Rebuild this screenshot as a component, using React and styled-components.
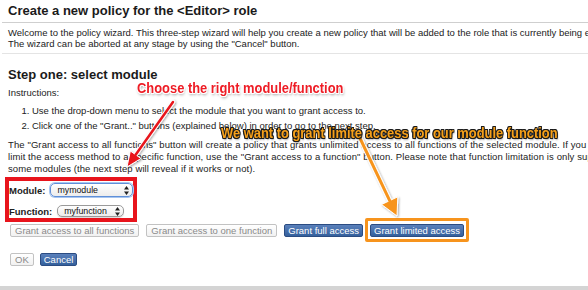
import React from 'react'
import styled, { createGlobalStyle } from 'styled-components'

const GlobalStyle = createGlobalStyle`
  html, body {
    margin: 0;
    padding: 0;
    overflow: hidden;
    background: #fff;
  }
`

const Page = styled.div`
  position: relative;
  width: 760px;
  height: 290px;
  padding: 0 8px;
  box-sizing: border-box;
  display: flex;
  flex-direction: column;
  font-family: "Liberation Sans", Arial, sans-serif;
  font-size: 9.5px;
  color: #222;
`

const Title = styled.h1`
  margin: 3px 0 0;
  font-size: 13px;
  line-height: 16px;
  font-weight: bold;
  color: #1a1a1a;
`

const Rule = styled.div`
  height: 1px;
  margin: ${p => p.top}px 0 0 -6px;
  background: ${p => p.tone};
`

const Lines = styled.p`
  margin: ${p => p.top}px 0 0;
  line-height: ${p => p.lh}px;
  letter-spacing: ${p => p.spread || 0}px;
  white-space: nowrap;
`

const StepTitle = styled.h2`
  margin: 13px 0 0;
  font-size: 13px;
  line-height: 16px;
  font-weight: bold;
  color: #1a1a1a;
`

const Steps = styled.ol`
  margin: 4px 0 0;
  padding-left: 24px;
  line-height: 15px;
  white-space: nowrap;
`

const RedMark = styled.div`
  width: 132px;
  box-sizing: border-box;
  margin: 2px 0 0 -3px;
  padding: 2px 0 0 0;
  border: 4px solid #e8141c;
  display: flex;
  flex-direction: column;
  gap: 7px;
`

const Field = styled.div`
  display: flex;
  align-items: center;
  height: 14px;
`

const Label = styled.span`
  font-weight: bold;
  margin-right: 5px;
`

const Select = styled.div`
  width: ${p => p.w}px;
  height: ${p => p.h}px;
  box-sizing: border-box;
  display: flex;
  align-items: center;
  justify-content: space-between;
  padding: 0 3px 0 6px;
  border-radius: 5px;
  border: 1px solid ${p => (p.focus ? '#5f8fd8' : '#9a9a9a')};
  box-shadow: ${p => (p.focus ? '0 0 0 1px #a8c6f0' : '0 1px 1px rgba(0,0,0,0.15)')};
  background: linear-gradient(#ffffff, #ececec);
  font-size: 8.8px;
  color: #111;
  white-space: nowrap;
`

const Arrows = () => (
  <svg width="5" height="9" viewBox="0 0 5 9">
    <path d="M2.5 0 L5 3.5 L0 3.5 Z M2.5 9 L5 5.5 L0 5.5 Z" fill="#222" />
  </svg>
)

const ButtonRow = styled.div`
  display: flex;
  align-items: center;
  gap: ${p => p.gap}px;
  margin: ${p => p.top}px 0 0 2px;
`

const Button = styled.button`
  height: 13px;
  box-sizing: border-box;
  margin: 0;
  padding: 0 ${p => (p.primary ? 3 : 4)}px;
  font-family: "Liberation Sans", Arial, sans-serif;
  font-size: 9.5px;
  line-height: 11px;
  border-radius: 2px;
  white-space: nowrap;
  border: 1px solid ${p => (p.primary ? '#2b4c82' : '#c2c2c2')};
  color: ${p => (p.primary ? '#fff' : '#8a8a8a')};
  background: ${p =>
    p.primary ? 'linear-gradient(#5a80bb, #34609c)' : 'linear-gradient(#ffffff, #f1f1f1)'};
`

const OrangeMark = styled.div`
  display: flex;
  padding: 3px 2px 2px;
  margin: -6px -5px -5px;
  border: 3px solid #f7941d;
  border-radius: 2px;
`

const Footer = styled.div`
  margin: auto -8px 0;
  height: 4px;
  background: #d4d4d4;
`

const Note = styled.div`
  position: absolute;
  left: ${p => p.x}px;
  top: ${p => p.y}px;
  font-family: "Liberation Sans", Arial, sans-serif;
  font-weight: bold;
  font-size: 15px;
  line-height: 1;
  white-space: nowrap;
  transform: scaleX(0.86);
  transform-origin: 0 0;
  color: ${p => (p.tone === 'red' ? '#ee1c25' : '#f6a01a')};
  text-shadow: ${p =>
    p.tone === 'red'
      ? '-1px -1px 0 #fff, 1px -1px 0 #fff, -1px 1px 0 #fff, 1px 1px 0 #fff, 0 1px 0 #fff, 1px 0 0 #fff, 0 -1px 0 #fff, -1px 0 0 #fff, 1px 2px 3px rgba(0,0,0,0.45)'
      : '-1px -1px 0 #1b1b1b, 1px -1px 0 #1b1b1b, -1px 1px 0 #1b1b1b, 1px 1px 0 #1b1b1b, 0 1px 0 #1b1b1b, 1px 0 0 #1b1b1b, 0 -1px 0 #1b1b1b, -1px 0 0 #1b1b1b, 1px 2px 2px rgba(0,0,0,0.4)'};
`

const Overlay = styled.svg`
  position: absolute;
  left: 0;
  top: 0;
  pointer-events: none;
`

// line end + head polygon for an arrow pointing from (x1,y1) to (x2,y2)
function arrow(x1, y1, x2, y2, len, half) {
  const dx = x2 - x1
  const dy = y2 - y1
  const d = Math.sqrt(dx * dx + dy * dy)
  const ux = dx / d
  const uy = dy / d
  const bx = x2 - ux * len
  const by = y2 - uy * len
  const pts = [
    [x2, y2],
    [bx - uy * half, by + ux * half],
    [bx + uy * half, by - ux * half]
  ]
  return { bx, by, pts: pts.map(p => p.join(',')).join(' ') }
}

const Arrow = ({ from, to, color, width, len, half, outline }) => {
  const a = arrow(from[0], from[1], to[0], to[1], len, half)
  return (
    <g filter="url(#shade)">
      <line x1={from[0]} y1={from[1]} x2={a.bx} y2={a.by} stroke={outline} strokeWidth={width + 2} strokeLinecap="round" />
      <polygon points={a.pts} fill={color} stroke={outline} strokeWidth="1" strokeLinejoin="round" />
      <line x1={from[0]} y1={from[1]} x2={a.bx} y2={a.by} stroke={color} strokeWidth={width} strokeLinecap="round" />
    </g>
  )
}

export default function App() {
  return (
    <Page>
      <GlobalStyle />
      <Title>Create a new policy for the &lt;Editor&gt; role</Title>
      <Rule top={3} tone="#cfcfcf" />
      <Lines top={4} lh={11}>
        Welcome to the policy wizard. This three-step wizard will help you create a new policy that will be added to the role that is currently being edited.
        <br />
        The wizard can be aborted at any stage by using the "Cancel" button.
      </Lines>
      <Rule top={4} tone="#e4e4e4" />
      <StepTitle>Step one: select module</StepTitle>
      <Lines top={4} lh={12}>Instructions:</Lines>
      <Steps>
        <li>Use the drop-down menu to select the module that you want to grant access to.</li>
        <li>Click one of the "Grant.." buttons (explained below) in order to go to the next step.</li>
      </Steps>
      <Lines top={6} lh={12} spread={0.1}>
        The "Grant access to all functions" button will create a policy that grants unlimited access to all functions of the selected module. If you want to
        <br />
        limit the access method to a specific function, use the "Grant access to a function" button. Please note that function limitation is only supported by
        <br />
        some modules (the next step will reveal if it works or not).
      </Lines>
      <RedMark>
        <Field>
          <Label>Module:</Label>
          <Select w={83} h={14} focus>
            <span>mymodule</span>
            <Arrows />
          </Select>
        </Field>
        <Field>
          <Label>Function:</Label>
          <Select w={67} h={12}>
            <span>myfunction</span>
            <Arrows />
          </Select>
        </Field>
      </RedMark>
      <ButtonRow top={2} gap={7}>
        <Button disabled>Grant access to all functions</Button>
        <Button disabled>Grant access to one function</Button>
        <Button primary>Grant full access</Button>
        <OrangeMark>
          <Button primary>Grant limited access</Button>
        </OrangeMark>
      </ButtonRow>
      <ButtonRow top={16} gap={6}>
        <Button disabled>OK</Button>
        <Button primary>Cancel</Button>
      </ButtonRow>
      <Footer />

      <Overlay width="588" height="290" viewBox="0 0 588 290">
        <defs>
          <filter id="shade" x="-20%" y="-20%" width="140%" height="140%">
            <feDropShadow dx="1" dy="1" stdDeviation="1" floodOpacity="0.35" />
          </filter>
        </defs>
        <Arrow from={[173, 102]} to={[127, 167]} color="#e8141c" outline="#fff" width={2.5} len={15} half={6.5} />
        <Arrow from={[358, 134]} to={[397, 216]} color="#f7941d" outline="#fff" width={3} len={17} half={9} />
      </Overlay>
      <Note tone="red" x={137} y={80}>Choose the right module/function</Note>
      <Note tone="orange" x={221} y={125}>We want to grant limite access for our module function</Note>
    </Page>
  )
}
